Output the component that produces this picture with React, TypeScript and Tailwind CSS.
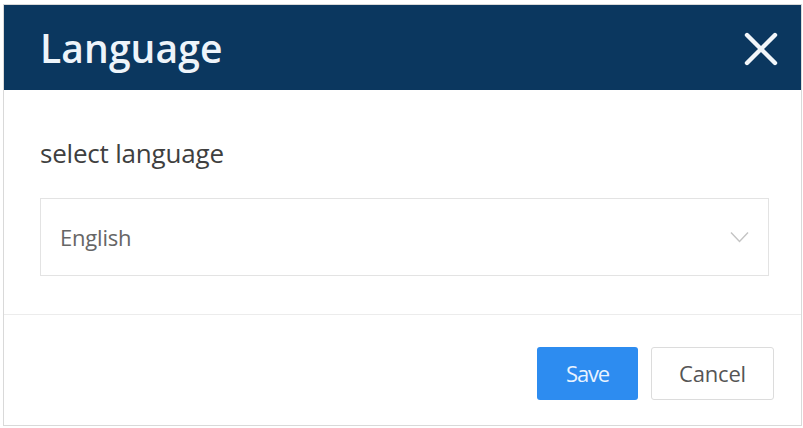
import { useState } from "react";

const languages = ["English", "中文", "Deutsch", "Français"];

function CloseIcon() {
  return (
    <svg width="34" height="34" viewBox="0 0 34 34" fill="none" aria-hidden="true">
      <path d="M3 3L31 31M31 3L3 31" stroke="#f2f6fa" strokeWidth="4.4" strokeLinecap="round" />
    </svg>
  );
}

function ChevronDown() {
  return (
    <svg width="19" height="12" viewBox="0 0 19 12" fill="none" aria-hidden="true">
      <path d="M1 1.5L9.5 10.5L18 1.5" stroke="#c4c4c4" strokeWidth="1.4" />
    </svg>
  );
}

export default function App() {
  const [language] = useState(languages[0]);

  return (
    <div
      className="h-[428px] w-[803px] bg-white pb-[2px] pl-[3px] pr-[1px] pt-[4px]"
      style={{ fontFamily: '"Open Sans", "Noto Sans", sans-serif' }}
    >
      <div className="flex h-full flex-col border border-[#d9d9d9] bg-white">
        <header className="flex h-[85px] shrink-0 items-center justify-between bg-[#0b375f] pl-[36px] pr-[23px]">
          <h1 className="text-[39px] font-semibold leading-none tracking-[0.1px] text-[#eef4fa]">Language</h1>
          <button type="button" className="mt-[2px] flex items-center justify-center">
            <CloseIcon />
          </button>
        </header>

        <section className="flex flex-1 flex-col pl-[36px] pr-[32px] pt-[48px]">
          <label className="text-[26px] leading-[31px] tracking-[-0.2px] text-[#3f3f3f]">select language</label>
          <div className="mt-[29px] flex h-[78px] items-center justify-between border border-[#e3e3e3] pl-[19px] pr-[19px]">
            <span className="text-[22px] tracking-[-0.2px] text-[#666]">{language}</span>
            <ChevronDown />
          </div>
        </section>

        <footer className="flex h-[111px] shrink-0 justify-end gap-[13px] border-t border-[#ececec] pr-[27px] pt-[32px]">
          <button
            type="button"
            className="h-[53px] w-[101px] rounded-[3px] bg-[#2d8cf0] text-[22px] tracking-[-1.2px] text-[#e8f3ff]"
          >
            Save
          </button>
          <button
            type="button"
            className="h-[53px] w-[123px] rounded-[3px] border border-[#dcdcdc] bg-white text-[22px] tracking-[-0.2px] text-[#555]"
          >
            Cancel
          </button>
        </footer>
      </div>
    </div>
  );
}
